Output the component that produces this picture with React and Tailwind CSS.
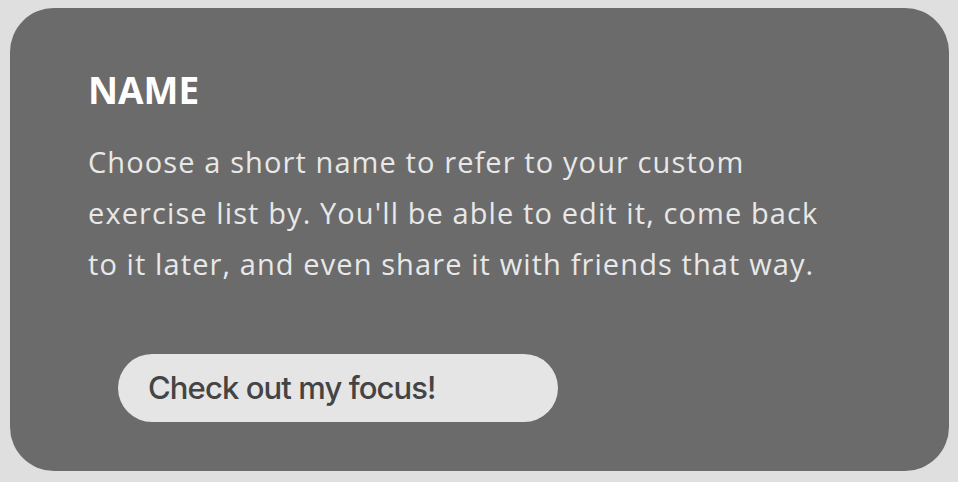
export default function App() {
  return (
    <div className="min-h-screen bg-[#dfdfdf] pt-[8px] pl-[10px] pr-[9px] pb-[11px]">
      <div className="h-[463px] rounded-[44px] bg-[#6b6b6b] pl-[78px] pt-[62px]">
        <h1
          className="text-[37px] leading-[40px] font-bold text-white"
          style={{ fontFamily: '"Open Sans", sans-serif' }}
        >
          NAME
        </h1>
        <p
          className="mt-[26px] text-[29px] leading-[51px] font-medium tracking-[1.1px] text-[#e8e8e8]"
          style={{ fontFamily: '"Open Sans", sans-serif' }}
        >
          Choose a short name to refer to your custom
          <br />
          exercise list by. You'll be able to edit it, come back
          <br />
          to it later, and even share it with friends that way.
        </p>
        <div className="mt-[65px] ml-[30px] flex h-[68px] w-[440px] items-center rounded-full bg-[#e5e5e5] pl-[30px]">
          <span
            className="text-[31px] font-medium tracking-[-0.9px] text-[#444444]"
            style={{ fontFamily: 'Inter, sans-serif' }}
          >
            Check out my focus!
          </span>
        </div>
      </div>
    </div>
  );
}
